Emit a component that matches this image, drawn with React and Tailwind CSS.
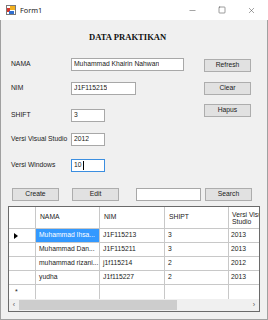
import { Minus, Square, X } from 'lucide-react';

const rows = [
  { nama: 'Muhammad Ihsa...', nim: 'J1F115213', shift: '3', vs: '2013', sel: true },
  { nama: 'Muhammad Dan...', nim: 'J1F115211', shift: '3', vs: '2013' },
  { nama: 'muhammad rizani...', nim: 'j1f115214', shift: '2', vs: '2012' },
  { nama: 'yudha', nim: 'J1f115227', shift: '2', vs: '2013' },
];

function FormIcon() {
  return (
    <svg width="10" height="10" viewBox="0 0 10 10">
      <rect x="0.5" y="0.5" width="9" height="9" fill="#fff" stroke="#7a7a7a" />
      <rect x="4" y="1" width="5" height="4" fill="#f2b01e" />
      <rect x="1" y="3" width="3" height="4" fill="#d9372b" />
      <rect x="3" y="6" width="5" height="3" fill="#2f6fd0" />
    </svg>
  );
}

function Field({ label, width, value, focused }) {
  return (
    <div className="flex items-center h-[13px]">
      <span className="w-[60px] whitespace-nowrap">{label}</span>
      <div
        className={`h-[13px] bg-white border flex items-center pl-[2px] ${focused ? 'border-[#3b8ee0]' : 'border-[#a8a8a8]'}`}
        style={{ width }}
      >
        <span className="whitespace-nowrap overflow-hidden">{value}</span>
        {focused && <span className="w-px h-[9px] bg-black ml-[1px]" />}
      </div>
    </div>
  );
}

function Btn({ children, w = 'w-[47px]' }) {
  return (
    <div className={`${w} h-[13px] bg-[#e1e1e1] border border-[#adadad] flex items-center justify-center`}>
      {children}
    </div>
  );
}

function Cell({ children, w, className = '' }) {
  return (
    <div className={`${w} shrink-0 border-r border-[#c8c8c8] flex items-center pl-[3px] overflow-hidden whitespace-nowrap ${className}`}>
      {children}
    </div>
  );
}

export default function App() {
  return (
    <div className="w-[268px] h-[320px] overflow-hidden flex flex-col text-[6.75px] text-[#1a1a1a] font-['Liberation_Sans',Arial,sans-serif]">
      {/* Title bar */}
      <div className="h-[20px] bg-white flex items-center shrink-0">
        <div className="ml-[6px]"><FormIcon /></div>
        <span className="ml-[4px] text-[7.3px] text-[#222] font-['Noto_Sans',sans-serif]">Form1</span>
        <Minus className="ml-auto w-[9px] h-[9px] text-[#444]" strokeWidth={1.3} />
        <Square className="ml-[21px] w-[8px] h-[8px] text-[#444]" strokeWidth={1.6} />
        <X className="ml-[21px] mr-[12px] w-[9px] h-[9px] text-[#444]" strokeWidth={1.3} />
      </div>

      {/* Body */}
      <div className="flex-1 bg-[#f0f0f0] border-x border-b border-[#a0a0a0] flex flex-col">
        <div className="mt-[12px] h-[10px] leading-[10px] ml-[88px] font-['Liberation_Serif',serif] font-bold text-[8.6px] text-[#111]">
          DATA PRAKTIKAN
        </div>

        <div className="mt-[16px] flex">
          <div className="pl-[10px] w-[203px] flex flex-col">
            <Field label="NAMA" width={113} value="Muhammad Khairin Nahwan" />
            <div className="mt-[11px]"><Field label="NIM" width={65} value="J1F115215" /></div>
            <div className="mt-[14px]"><Field label="SHIFT" width={34} value="3" /></div>
            <div className="mt-[11px]"><Field label="Versi Visual Studio" width={34} value="2012" /></div>
            <div className="mt-[13px]"><Field label="Versi Windows" width={34} value="10" focused /></div>
          </div>
          <div className="flex flex-col">
            <div className="mt-[1px]"><Btn>Refresh</Btn></div>
            <div className="mt-[10px]"><Btn>Clear</Btn></div>
            <div className="mt-[9px]"><Btn>Hapus</Btn></div>
          </div>
        </div>

        <div className="mt-[16px] flex items-center pl-[11px]">
          <Btn>Create</Btn>
          <div className="ml-[13px]"><Btn>Edit</Btn></div>
          <div className="ml-[17px] w-[65px] h-[13px] bg-white border border-[#a8a8a8]" />
          <div className="ml-[4px]"><Btn>Search</Btn></div>
        </div>

        {/* Data grid */}
        <div className="mt-[5px] ml-[7px] w-[252px] h-[106px] border border-[#6a6a6a] bg-white flex flex-col overflow-hidden shrink-0">
          <div className="h-[22px] flex border-b border-[#c8c8c8] shrink-0">
            <Cell w="w-[27px]" />
            <Cell w="w-[64px]" className="pl-[4px]">NAMA</Cell>
            <Cell w="w-[65px]" className="pl-[4px]">NIM</Cell>
            <Cell w="w-[64px]" className="pl-[4px]">SHIPT</Cell>
            <div className="w-[30px] shrink-0 pl-[3px] leading-[7px] flex flex-col justify-center overflow-hidden whitespace-nowrap">
              <span>Versi Visual</span>
              <span>Studio</span>
            </div>
          </div>
          {rows.map((r, i) => (
            <div key={i} className="h-[14px] flex border-b border-[#c8c8c8] shrink-0">
              <Cell w="w-[27px]" className="pl-[5px]">
                {r.sel && (
                  <svg width="4" height="6" viewBox="0 0 4 6"><path d="M0 0L4 3L0 6Z" fill="#000" /></svg>
                )}
              </Cell>
              <Cell w="w-[64px]" className={`pl-[2px] ${r.sel ? 'bg-[#3399ff] text-white' : ''}`}>{r.nama}</Cell>
              <Cell w="w-[65px]" className="pl-[2px]">{r.nim}</Cell>
              <Cell w="w-[64px]" className="pl-[3px]">{r.shift}</Cell>
              <div className="w-[30px] shrink-0 pl-[2px] flex items-center">{r.vs}</div>
            </div>
          ))}
          <div className="h-[14px] flex shrink-0">
            <Cell w="w-[27px]" className="pl-[6px] text-[7px]">*</Cell>
            <Cell w="w-[64px]" />
            <Cell w="w-[65px]" />
            <Cell w="w-[64px]" />
          </div>
          <div className="h-[12px] flex items-center bg-[#f0f0f0] shrink-0">
            <span className="w-[10px] text-center text-[7px] text-[#555]">‹</span>
            <div className="w-[158px] h-[10px] bg-[#cdcdcd]" />
            <span className="ml-auto w-[10px] text-center text-[7px] text-[#555]">›</span>
          </div>
        </div>
      </div>
    </div>
  );
}
